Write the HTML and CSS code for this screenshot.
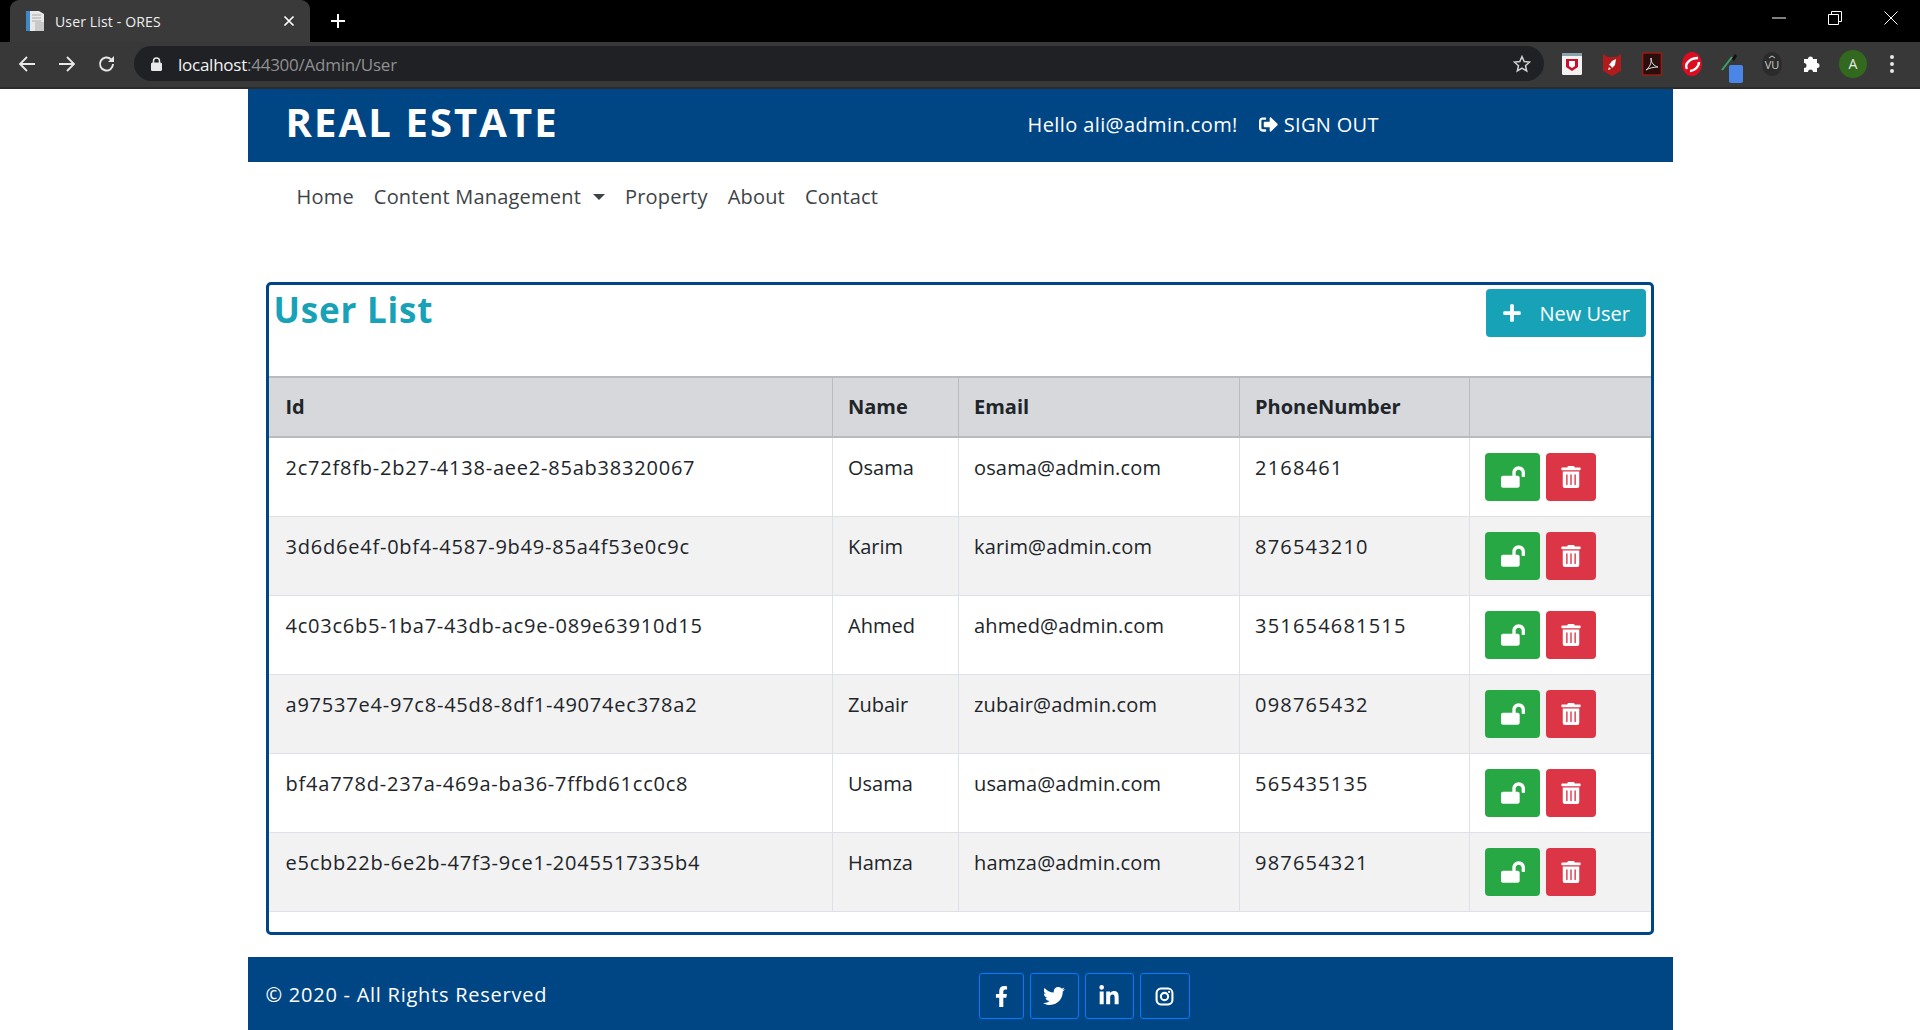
FILE: index.html
```html
<!DOCTYPE html>
<html>
<head>
    <meta name="viewport" content="width=device-width, initial-scale=1">
    <title>User List - ORES</title>
    <link rel="stylesheet" href="styles.css">
</head>
<body>
<svg class="defs" width="0" height="0">
    <symbol id="i-plus" viewBox="0 0 448 512"><path d="M416 208H272V64c0-17.67-14.33-32-32-32h-32c-17.67 0-32 14.33-32 32v144H32c-17.67 0-32 14.33-32 32v32c0 17.67 14.33 32 32 32h144v144c0 17.67 14.33 32 32 32h32c17.67 0 32-14.33 32-32V304h144c17.67 0 32-14.33 32-32v-32c0-17.67-14.33-32-32-32z"/></symbol>
    <symbol id="i-open" viewBox="0 0 576 512"><path d="M423.5 0C339.5.3 272 69.5 272 153.5V224H48c-26.5 0-48 21.5-48 48v192c0 26.5 21.5 48 48 48h352c26.5 0 48-21.5 48-48V272c0-26.5-21.5-48-48-48h-48v-71.1c0-39.6 31.7-72.5 71.3-72.9 40-.4 72.7 32.1 72.7 72v80c0 13.3 10.7 24 24 24h32c13.3 0 24-10.7 24-24v-80C576 68 507.5-.3 423.5 0z"/></symbol>
    <symbol id="i-trash" viewBox="0 0 448 512"><path d="M32 464a48 48 0 0 0 48 48h288a48 48 0 0 0 48-48V128H32zm272-256a16 16 0 0 1 32 0v224a16 16 0 0 1-32 0zm-96 0a16 16 0 0 1 32 0v224a16 16 0 0 1-32 0zm-96 0a16 16 0 0 1 32 0v224a16 16 0 0 1-32 0zM432 32H312l-9.4-18.7A24 24 0 0 0 281.1 0H166.8a23.72 23.72 0 0 0-21.4 13.3L136 32H16A16 16 0 0 0 0 48v32a16 16 0 0 0 16 16h416a16 16 0 0 0 16-16V48a16 16 0 0 0-16-16z"/></symbol>
    <symbol id="i-signout" viewBox="0 0 512 512"><path d="M497 273L329 441c-15 15-41 4.5-41-17v-96H152c-13.3 0-24-10.7-24-24v-96c0-13.3 10.7-24 24-24h136V88c0-21.4 25.9-32 41-17l168 168c9.3 9.4 9.3 24.6 0 34zM192 436v-40c0-6.6-5.4-12-12-12H96c-17.7 0-32-14.3-32-32V160c0-17.7 14.3-32 32-32h84c6.6 0 12-5.4 12-12V76c0-6.6-5.4-12-12-12H96c-53 0-96 43-96 96v192c0 53 43 96 96 96h84c6.6 0 12-5.4 12-12z"/></symbol>
    <symbol id="i-fb" viewBox="0 0 320 512"><path d="M279.14 288l14.22-92.66h-88.91v-60.13c0-25.35 12.42-50.06 52.24-50.06h40.42V6.26S260.43 0 225.36 0c-73.22 0-121.08 44.38-121.08 124.72v70.62H22.89V288h81.39v224h100.17V288z"/></symbol>
    <symbol id="i-tw" viewBox="0 0 512 512"><path d="M459.37 151.716c.325 4.548.325 9.097.325 13.645 0 138.72-105.583 298.558-298.558 298.558-59.452 0-114.68-17.219-161.137-47.106 8.447.974 16.568 1.299 25.34 1.299 49.055 0 94.213-16.568 130.274-44.832-46.132-.975-84.792-31.188-98.112-72.772 6.498.974 12.995 1.624 19.818 1.624 9.421 0 18.843-1.3 27.614-3.573-48.081-9.747-84.143-51.98-84.143-102.985v-1.299c13.969 7.797 30.214 12.67 47.431 13.319-28.264-18.843-46.781-51.005-46.781-87.391 0-19.492 5.197-37.36 14.294-52.954 51.655 63.675 129.3 105.258 216.365 109.807-1.624-7.797-2.599-15.918-2.599-24.04 0-57.828 46.782-104.934 104.934-104.934 30.213 0 57.502 12.67 76.67 33.137 23.715-4.548 46.456-13.32 66.599-25.34-7.798 24.366-24.366 44.833-46.132 57.827 21.117-2.273 41.584-8.122 60.426-16.243-14.292 20.791-32.161 39.308-52.628 54.253z"/></symbol>
    <symbol id="i-in" viewBox="0 0 448 512"><path d="M100.28 448H7.4V148.9h92.88zM53.79 108.1C24.09 108.1 0 83.5 0 53.8a53.79 53.79 0 0 1 107.58 0c0 29.7-24.1 54.3-53.79 54.3zM447.9 448h-92.68V302.4c0-34.7-.7-79.2-48.29-79.2-48.29 0-55.69 37.7-55.69 76.7V448h-92.78V148.9h89.08v40.8h1.3c12.4-23.5 42.69-48.3 87.88-48.3 94 0 111.28 61.9 111.28 142.3V448z"/></symbol>
    <symbol id="i-ig" viewBox="0 0 24 24"><rect x="2" y="2" width="20" height="20" rx="5.5" fill="none" stroke="currentColor" stroke-width="2.6"/><circle cx="12" cy="12" r="4.6" fill="none" stroke="currentColor" stroke-width="2.6"/><circle cx="17.8" cy="6.2" r="1.4"/></symbol>
</svg>

<!-- browser window top -->
<div class="tabstrip">
    <div class="tab">
        <svg class="favicon" width="20" height="24" viewBox="0 0 20 24"><path d="M1 2h13l5 3v17H1z" fill="#e8e8e8"/><rect x="1" y="2" width="4" height="20" fill="#3f87c5"/><rect x="10" y="13" width="9" height="9" fill="#c9c9c9"/><path d="M7 6h9M7 9h9M7 12h9" stroke="#aaa"/></svg>
        <span class="tab-title">User List - ORES</span>
        <svg class="tab-close" width="12" height="12" viewBox="0 0 12 12"><path d="M1.5 1.5l9 9M10.5 1.5l-9 9" stroke="#fff" stroke-width="1.7"/></svg>
    </div>
    <svg class="new-tab" width="16" height="16" viewBox="0 0 16 16"><path d="M8 1v14M1 8h14" stroke="#fff" stroke-width="2"/></svg>
    <div class="win-controls">
        <svg width="14" height="14" viewBox="0 0 14 14"><path d="M0 7h14" stroke="#fff"/></svg>
        <svg width="14" height="14" viewBox="0 0 14 14"><path d="M3.5 3V.5h10v10H11M.5 3.5h10v10H.5z" fill="none" stroke="#fff"/></svg>
        <svg width="14" height="14" viewBox="0 0 14 14"><path d="M.5.5l13 13M13.5.5l-13 13" stroke="#fff"/></svg>
    </div>
</div>
<div class="toolbar">
    <svg class="nav-ico" width="18" height="18" viewBox="0 0 18 18"><path d="M17 9H2M9 2L2 9l7 7" fill="none" stroke="#e8e8e8" stroke-width="1.8"/></svg>
    <svg class="nav-ico" width="18" height="18" viewBox="0 0 18 18"><path d="M1 9h15M9 2l7 7-7 7" fill="none" stroke="#e8e8e8" stroke-width="1.8"/></svg>
    <svg class="nav-ico" width="18" height="18" viewBox="0 0 18 18"><path d="M15 9a6.5 6.5 0 1 1-2-4.7" fill="none" stroke="#e8e8e8" stroke-width="1.9"/><path d="M16 1v6h-6z" fill="#e8e8e8"/></svg>
    <div class="omnibox">
        <svg class="lock" width="11" height="14" viewBox="0 0 11 14"><path d="M2.5 6V4a3 3 0 0 1 6 0v2" fill="none" stroke="#e8e8e8" stroke-width="1.5"/><rect y="5.5" width="11" height="8.5" rx="1.5" fill="#e8e8e8"/></svg>
        <span class="url"><span class="url-host">localhost</span>:44300/Admin/User</span>
        <svg class="star" width="18" height="18" viewBox="0 0 18 18"><path d="M9 1.6l2.2 5 5.4.5-4.1 3.6 1.2 5.3L9 13.2 4.3 16l1.2-5.3L1.4 7.1l5.4-.5z" fill="none" stroke="#d0d0d0" stroke-width="1.5"/></svg>
    </div>
    <div class="extensions">
        <span class="ext"><svg width="20" height="24" viewBox="0 0 20 24"><rect y="1" width="20" height="22" rx="1.5" fill="#f2f2f2"/><rect y="1" width="20" height="3" fill="#8aa0ad"/><path d="M4 7h12v8l-6 4-6-4z" fill="#c8102e"/><path d="M7 9h6v5l-3 2-3-2z" fill="#fff"/></svg></span>
        <span class="ext"><svg width="18" height="24" viewBox="0 0 18 24"><path d="M0 2l5 3h8l5-3v17l-9 5-9-5z" fill="#b01c1c"/><path d="M13 7l-1 6-3 3-1-2-2-1 3-4zM6 15l-1 3 3-1z" fill="#fff"/></svg></span>
        <span class="ext"><svg width="20" height="24" viewBox="0 0 20 24"><rect x=".7" y="1" width="18.6" height="22" fill="#2a0e0e" stroke="#9c1b12" stroke-width="1.4"/><path d="M4 18c3-2 6-7 5-12 0 5 3 8 7 9-4 0-9 1-12 3z" fill="none" stroke="#ddd"/></svg></span>
        <span class="ext"><svg width="20" height="24" viewBox="0 0 20 24"><ellipse cx="10" cy="12" rx="10" ry="12" fill="#dc0d21"/><path d="M5 17C2 12 8 6 16 6M8 19c4 0 9-4 9-9" fill="none" stroke="#fff" stroke-width="2.4"/></svg></span>
        <span class="ext ext-picker"><svg width="24" height="34" viewBox="0 0 24 34"><path d="M2 20L12 7" stroke="#3fa06a" stroke-width="2"/><path d="M12 9l3-5 2 2-3 5z" fill="#111"/><rect x="9" y="15" width="14" height="18" rx="2" fill="#4a86e8"/></svg></span>
        <span class="ext"><svg width="20" height="24" viewBox="0 0 20 24"><ellipse cx="10" cy="12" rx="10" ry="12" fill="#2b2b2b"/><path d="M7 6l3-2 3 2" fill="none" stroke="#ccc"/><text class="vu" x="10" y="17" text-anchor="middle">VU</text></svg></span>
        <span class="ext"><svg width="18" height="18" viewBox="0 0 18 18"><path d="M1 4h4a2.5 2.5 0 0 1 5 0h4v4a2.5 2.5 0 0 1 0 5v4h-4a2.5 2.5 0 0 0-5 0H1v-4a2.5 2.5 0 0 0 0-5z" fill="#fff"/></svg></span>
        <span class="avatar">A</span>
        <svg class="kebab" width="4" height="18" viewBox="0 0 4 18"><circle cx="2" cy="2" r="2" fill="#e8e8e8"/><circle cx="2" cy="9" r="2" fill="#e8e8e8"/><circle cx="2" cy="16" r="2" fill="#e8e8e8"/></svg>
    </div>
</div>

<div class="page">
    <header class="topbar">
        <a class="brand" href="#">REAL ESTATE</a>
        <span class="hello">Hello ali@admin.com!</span>
        <a class="signout" href="#"><svg class="ico" width="19" height="19"><use href="#i-signout"/></svg>SIGN OUT</a>
    </header>

    <nav class="mainnav">
        <a href="#">Home</a>
        <a href="#" class="dropdown">Content Management</a>
        <a href="#">Property</a>
        <a href="#">About</a>
        <a href="#">Contact</a>
    </nav>

    <main class="panel">
        <div class="panel-head">
            <h2>User List</h2>
            <a class="btn-new" href="#"><svg class="ico" width="20" height="20"><use href="#i-plus"/></svg>New User</a>
        </div>
        <table class="users">
            <thead>
                <tr><th class="c-id">Id</th><th class="c-name">Name</th><th class="c-email">Email</th><th class="c-phone">PhoneNumber</th><th></th></tr>
            </thead>
            <tbody>
                <tr><td class="guid">2c72f8fb-2b27-4138-aee2-85ab38320067</td><td>Osama</td><td class="email">osama@admin.com</td><td class="phone">2168461</td>
                    <td><div class="actions"><a class="btn-lock" href="#"><svg class="ico" width="24" height="24"><use href="#i-open"/></svg></a><a class="btn-del" href="#"><svg class="ico" width="20" height="22"><use href="#i-trash"/></svg></a></div></td></tr>
                <tr><td class="guid">3d6d6e4f-0bf4-4587-9b49-85a4f53e0c9c</td><td>Karim</td><td class="email">karim@admin.com</td><td class="phone">876543210</td>
                    <td><div class="actions"><a class="btn-lock" href="#"><svg class="ico" width="24" height="24"><use href="#i-open"/></svg></a><a class="btn-del" href="#"><svg class="ico" width="20" height="22"><use href="#i-trash"/></svg></a></div></td></tr>
                <tr><td class="guid">4c03c6b5-1ba7-43db-ac9e-089e63910d15</td><td>Ahmed</td><td class="email">ahmed@admin.com</td><td class="phone">351654681515</td>
                    <td><div class="actions"><a class="btn-lock" href="#"><svg class="ico" width="24" height="24"><use href="#i-open"/></svg></a><a class="btn-del" href="#"><svg class="ico" width="20" height="22"><use href="#i-trash"/></svg></a></div></td></tr>
                <tr><td class="guid">a97537e4-97c8-45d8-8df1-49074ec378a2</td><td>Zubair</td><td class="email">zubair@admin.com</td><td class="phone">098765432</td>
                    <td><div class="actions"><a class="btn-lock" href="#"><svg class="ico" width="24" height="24"><use href="#i-open"/></svg></a><a class="btn-del" href="#"><svg class="ico" width="20" height="22"><use href="#i-trash"/></svg></a></div></td></tr>
                <tr><td class="guid">bf4a778d-237a-469a-ba36-7ffbd61cc0c8</td><td>Usama</td><td class="email">usama@admin.com</td><td class="phone">565435135</td>
                    <td><div class="actions"><a class="btn-lock" href="#"><svg class="ico" width="24" height="24"><use href="#i-open"/></svg></a><a class="btn-del" href="#"><svg class="ico" width="20" height="22"><use href="#i-trash"/></svg></a></div></td></tr>
                <tr><td class="guid">e5cbb22b-6e2b-47f3-9ce1-2045517335b4</td><td>Hamza</td><td class="email">hamza@admin.com</td><td class="phone">987654321</td>
                    <td><div class="actions"><a class="btn-lock" href="#"><svg class="ico" width="24" height="24"><use href="#i-open"/></svg></a><a class="btn-del" href="#"><svg class="ico" width="20" height="22"><use href="#i-trash"/></svg></a></div></td></tr>
            </tbody>
        </table>
    </main>

    <footer class="footer">
        <span class="copy">&copy; 2020 - All Rights Reserved</span>
        <div class="social">
            <a class="soc-fb" href="#"><svg class="ico" width="13" height="21"><use href="#i-fb"/></svg></a>
            <a class="soc-tw" href="#"><svg class="ico" width="22" height="22"><use href="#i-tw"/></svg></a>
            <a class="soc-in" href="#"><svg class="ico" width="20" height="22"><use href="#i-in"/></svg></a>
            <a class="soc-ig" href="#"><svg class="ico" width="19" height="19"><use href="#i-ig"/></svg></a>
        </div>
    </footer>
</div>
</body>
</html>
```

FILE: styles.css
```css
html, body {margin: 0; height: 100%; overflow: hidden;}
body {font-family: "Open Sans", "Noto Sans", sans-serif; font-size: 20px; color: #212529; background-color: #fff;}
a {text-decoration: none; color: inherit;}
.defs {position: absolute;}
.ico {fill: currentColor; display: block;}

/* browser chrome */
.tabstrip {height: 42px; background-color: #000; display: flex; align-items: flex-end;}
.tab {
    width: 300px;
    height: 42px;
    margin-left: 10px;
    box-sizing: border-box;
    padding: 0 15px;
    background-color: #3a3a3a;
    border-radius: 9px 9px 0 0;
    display: flex;
    align-items: center;
    color: #fff;
}
.favicon {flex: none;}
.tab-title {margin-left: 10px; flex: 1; font-size: 14px; letter-spacing: 0.15px; color: #f0f0f0;}
.new-tab {margin: 0 0 13px 20px;}
.win-controls {margin-left: auto; align-self: flex-start; display: flex; gap: 42px; padding: 11px 22px 0 0;}
.toolbar {
    height: 47px;
    box-sizing: border-box;
    padding: 5px 0 7px 0;
    background-color: #383838;
    border-bottom: 2px solid #2b2b2b;
    display: flex;
    align-items: center;
}
.nav-ico {margin-left: 18px; margin-right: 4px;}
.omnibox {
    margin-left: 14px;
    width: 1410px;
    height: 35px;
    box-sizing: border-box;
    padding: 0 13px 0 17px;
    background-color: #202124;
    border-radius: 18px;
    display: flex;
    align-items: center;
}
.lock {flex: none;}
.url {margin: 1px 0 0 16px; font-size: 17px; letter-spacing: -0.25px; color: #8f9092;}
.url-host {color: #f1f3f4;}
.star {margin-left: auto;}
.extensions {display: flex; align-items: center; margin-left: 8px;}
.ext {width: 40px; display: flex; justify-content: center; align-items: center;}
.ext-picker svg {margin-top: 6px;}
.vu {font-size: 11px; fill: #ccc;}
.avatar {
    width: 28px;
    height: 28px;
    margin-left: 7px;
    border-radius: 50%;
    background-color: #33691e;
    color: #e8e8e8;
    font-size: 14px;
    text-align: center;
    line-height: 28px;
}
.kebab {margin-left: 23px;}

/* page */
.page {width: 1425px; margin: 0 auto;}
.topbar {
    height: 73px;
    box-sizing: border-box;
    padding-left: 38px;
    background-color: #004685;
    color: #fff;
    display: flex;
    align-items: center;
}
.brand {font-size: 40px; font-weight: 700; letter-spacing: 2.1px; width: 742px; margin-top: -9px;}
.hello {margin-top: -3px; letter-spacing: 0.4px;}
.signout {display: flex; align-items: center; gap: 6px; margin-left: 21px; margin-top: -3px; letter-spacing: 0.3px;}
.mainnav {height: 73px; padding: 21px 0 0 49px; box-sizing: border-box; display: flex; gap: 20px; color: #3e4347; letter-spacing: 0.2px;}
.dropdown::after {
    content: "";
    display: inline-block;
    margin-left: 12px;
    vertical-align: 4px;
    border-top: 6px solid;
    border-left: 6px solid transparent;
    border-right: 6px solid transparent;
}

.panel {
    margin: 47px 19px 0 18px;
    height: 653px;
    box-sizing: border-box;
    border: 3px solid #004685;
    border-radius: 5px;
}
.panel-head {height: 91px; padding: 0 5px 0 5px; display: flex; justify-content: space-between; align-items: flex-start;}
.panel-head h2 {margin: 0; font-size: 35px; font-weight: 700; color: #17a2b8; letter-spacing: 0.8px; line-height: 50px;}
.btn-new {
    margin-top: 4px;
    width: 160px;
    height: 48px;
    box-sizing: border-box;
    padding-left: 16px;
    background-color: #17a2b8;
    color: #fff;
    border-radius: 4px;
    display: flex;
    align-items: center;
    gap: 18px;
}

.users {width: 100%; border-collapse: collapse; table-layout: fixed;}
.users th {
    height: 60px;
    box-sizing: border-box;
    padding: 0 15px 2px;
    background-color: #d6d8db;
    border: 1px solid #b9bbbe;
    border-width: 2px 1px;
    text-align: left;
    font-weight: 700;
    color: #212529;
}
.users th:first-child, .users td:first-child {border-left: none;}
.users th:last-child, .users td:last-child {border-right: none;}
.users td {
    height: 79px;
    box-sizing: border-box;
    padding: 16px 15px 0;
    vertical-align: top;
    border: 1px solid #dee2e6;
    line-height: 28px;
}
.users tr:nth-child(even) td {background-color: #f2f2f2;}
.users th:first-child, .users td.guid {padding-left: 17px;}
.users td.guid {letter-spacing: 0.78px;}
.users td.email {letter-spacing: 0.15px;}
.users td.phone {letter-spacing: 1.2px;}
.users td:last-child {padding-top: 0;}
.c-id {width: 564px;}
.c-name {width: 126px;}
.c-email {width: 281px;}
.c-phone {width: 230px;}
.actions {display: flex; gap: 6px; margin-top: 15px;}
.btn-lock, .btn-del {height: 48px; border-radius: 4px; color: #fff; display: flex; align-items: center; justify-content: center;}
.btn-lock {width: 55px; background-color: #28a745;}
.btn-del {width: 50px; background-color: #dc3545;}

.footer {
    margin-top: 22px;
    height: 73px;
    box-sizing: border-box;
    padding-left: 18px;
    background-color: #004685;
    color: #fff;
    display: flex;
    align-items: center;
}
.copy {width: 713px; letter-spacing: 0.75px; margin-top: 1px;}
.social {display: flex; gap: 6px; margin-top: 5px;}
.social a {
    height: 46px;
    box-sizing: border-box;
    border: 1px solid #007bff;
    border-radius: 3px;
    display: flex;
    align-items: center;
    justify-content: center;
}
.soc-fb {width: 45px;}
.soc-tw {width: 49px;}
.soc-in {width: 49px;}
.soc-ig {width: 50px;}
```
